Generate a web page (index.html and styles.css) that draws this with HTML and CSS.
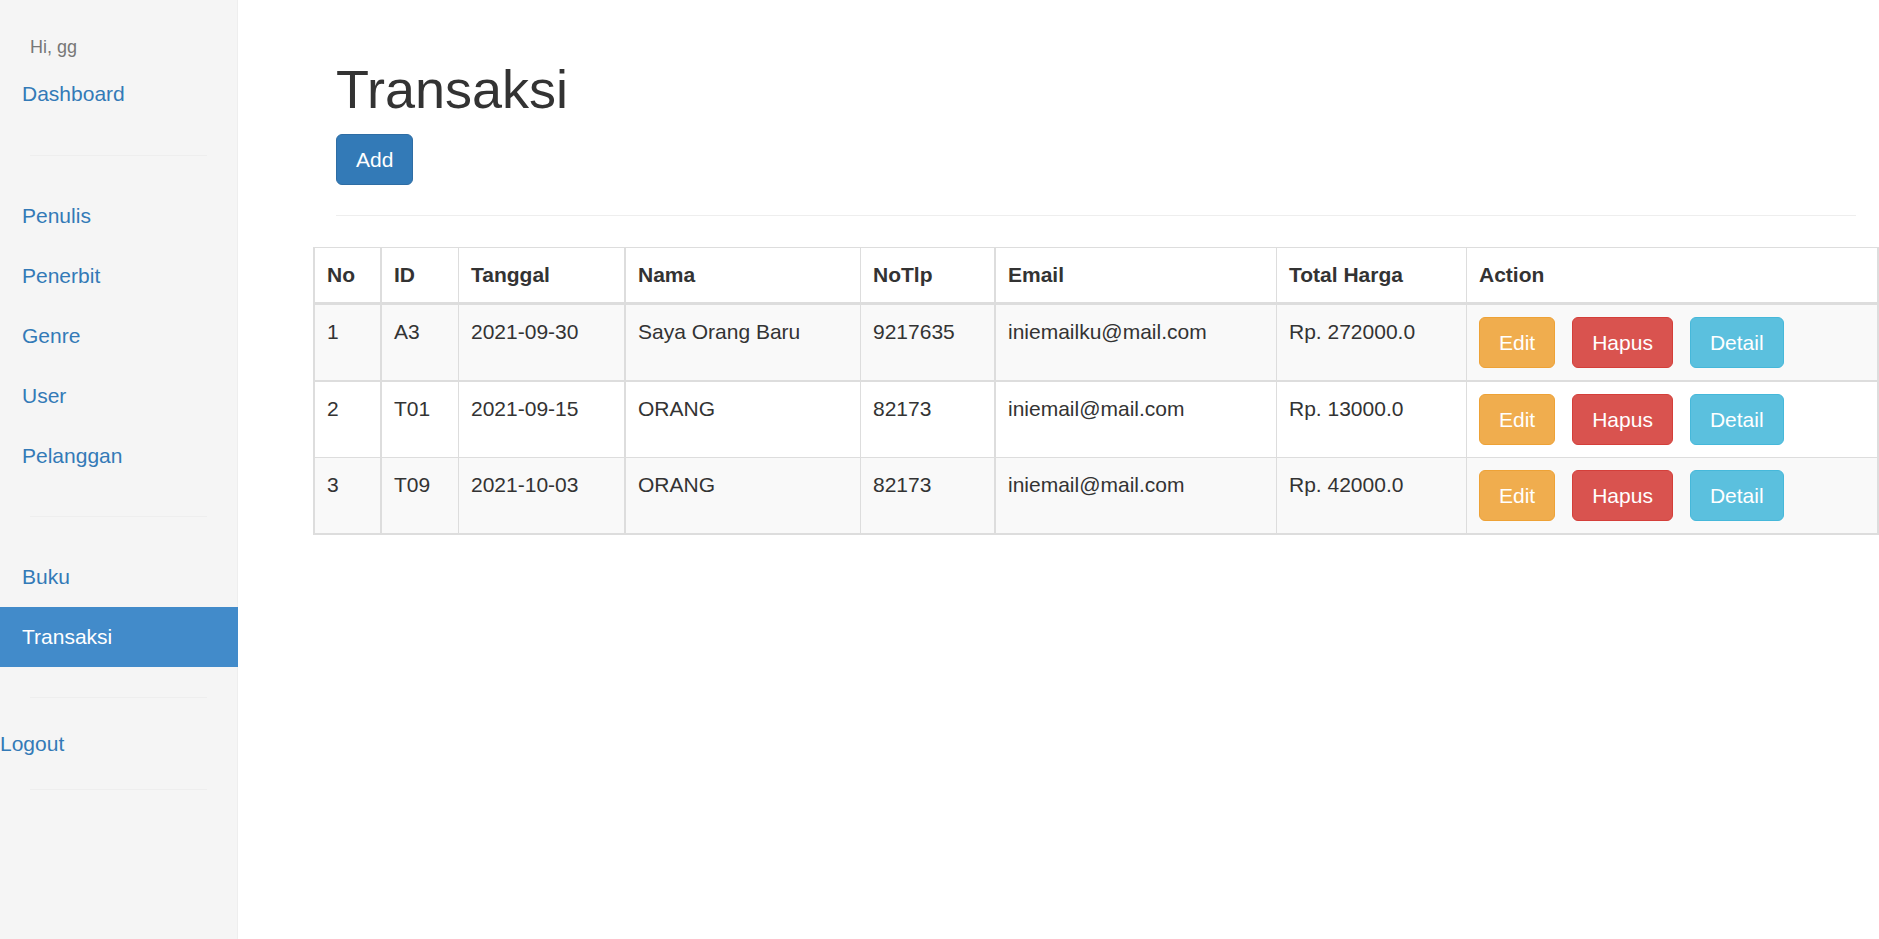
FILE: index.html
```html
<!DOCTYPE html>
<html lang="id">
<head>
<meta charset="utf-8">
<meta name="viewport" content="width=device-width, initial-scale=1">
<title>Transaksi</title>
<link rel="stylesheet" href="styles.css">
</head>
<body>
<div class="layout">
  <aside class="sidebar">
    <p class="greeting">Hi, gg</p>
    <nav>
      <ul class="nav nav-top">
        <li><a class="nav-link" href="#">Dashboard</a></li>
      </ul>
      <hr class="divider">
      <ul class="nav">
        <li><a class="nav-link" href="#">Penulis</a></li>
        <li><a class="nav-link" href="#">Penerbit</a></li>
        <li><a class="nav-link" href="#">Genre</a></li>
        <li><a class="nav-link" href="#">User</a></li>
        <li><a class="nav-link" href="#">Pelanggan</a></li>
      </ul>
      <hr class="divider">
      <ul class="nav">
        <li><a class="nav-link" href="#">Buku</a></li>
        <li><a class="nav-link active" href="#" aria-current="page">Transaksi</a></li>
      </ul>
      <hr class="divider">
      <a class="logout" href="#">Logout</a>
      <hr class="divider">
    </nav>
  </aside>
  <main class="main">
    <header class="page-header">
      <h1 class="title">Transaksi</h1>
      <button type="button" class="btn btn-primary">Add</button>
    </header>
    <table class="table">
      <colgroup>
        <col class="col-no"><col class="col-id"><col class="col-date"><col class="col-name">
        <col class="col-phone"><col class="col-email"><col class="col-total"><col>
      </colgroup>
      <thead>
        <tr><th>No</th><th>ID</th><th>Tanggal</th><th>Nama</th><th>NoTlp</th><th>Email</th><th>Total Harga</th><th>Action</th></tr>
      </thead>
      <tbody>
        <tr>
          <td>1</td><td>A3</td><td>2021-09-30</td><td>Saya Orang Baru</td><td>9217635</td><td>iniemailku@mail.com</td><td>Rp. 272000.0</td>
          <td><div class="actions"><button type="button" class="btn btn-warning">Edit</button><button type="button" class="btn btn-danger">Hapus</button><button type="button" class="btn btn-info">Detail</button></div></td>
        </tr>
        <tr>
          <td>2</td><td>T01</td><td>2021-09-15</td><td>ORANG</td><td>82173</td><td>iniemail@mail.com</td><td>Rp. 13000.0</td>
          <td><div class="actions"><button type="button" class="btn btn-warning">Edit</button><button type="button" class="btn btn-danger">Hapus</button><button type="button" class="btn btn-info">Detail</button></div></td>
        </tr>
        <tr>
          <td>3</td><td>T09</td><td>2021-10-03</td><td>ORANG</td><td>82173</td><td>iniemail@mail.com</td><td>Rp. 42000.0</td>
          <td><div class="actions"><button type="button" class="btn btn-warning">Edit</button><button type="button" class="btn btn-danger">Hapus</button><button type="button" class="btn btn-info">Detail</button></div></td>
        </tr>
      </tbody>
    </table>
  </main>
</div>
</body>
</html>
```

FILE: styles.css
```css
* {
  box-sizing: border-box;
}

body {
  margin: 0;
  background: #fff;
  color: #333;
  font-family: "Liberation Sans", Arial, sans-serif;
  font-size: 21px;
  line-height: 30px;
}

.layout {
  display: flex;
  min-height: 100vh;
}

/* Sidebar */
.sidebar {
  flex: none;
  width: 238px;
  padding-top: 34px;
  background: #f5f5f5;
  border-right: 1px solid #eee;
}

.greeting {
  margin: 0 30px;
  color: #777;
  font-size: 18px;
  line-height: 26px;
}

.nav {
  margin: 0 -1px 0 0;
  padding: 0;
  list-style: none;
}

.nav-top {
  padding-top: 4px;
  padding-bottom: 1px;
}

.nav-link {
  display: block;
  padding: 15px 22px;
  color: #337ab7;
  text-decoration: none;
}

.nav-link.active {
  background: #428bca;
  color: #fff;
}

.divider {
  margin: 30px;
  border: 0;
  border-top: 1px solid #eee;
}

.logout {
  display: block;
  padding-top: 1px;
  color: #337ab7;
  text-decoration: none;
}

/* Main content */
.main {
  flex: 1;
  min-width: 0;
  margin-left: 75px;
  padding-top: 60px;
}

.page-header {
  margin: 0 23px 31px;
  padding-bottom: 30px;
  border-bottom: 1px solid #eee;
}

.title {
  margin: 0 0 15px;
  font-size: 54px;
  font-weight: 500;
  line-height: 59px;
}

/* Buttons */
.btn {
  display: block;
  padding: 10px 19px;
  border: 1px solid transparent;
  border-radius: 6px;
  color: #fff;
  font: inherit;
  line-height: 29px;
  cursor: pointer;
}

.btn-primary {
  background: #337ab7;
  border-color: #2e6da4;
}

.btn-warning {
  background: #f0ad4e;
  border-color: #eea236;
}

.btn-danger {
  background: #d9534f;
  border-color: #d43f3a;
}

.btn-info {
  background: #5bc0de;
  border-color: #46b8da;
}

.actions {
  display: flex;
  gap: 17px;
}

/* Table */
.table {
  width: 100%;
  table-layout: fixed;
  border-collapse: separate;
  border-spacing: 0;
  border: solid #ddd;
  border-width: 1px 0 0 2px;
}

.table th,
.table td {
  padding: 12px;
  border: solid #ddd;
  border-width: 0 1px 2px 0;
  text-align: left;
  vertical-align: top;
}

.table th {
  border-bottom-width: 3px;
}

.table tbody tr:nth-child(even) td {
  border-bottom-width: 1px;
}

.table tbody tr:nth-child(odd) {
  background: #f9f9f9;
}

.table tr > :nth-child(1),
.table tr > :nth-child(3),
.table tr > :nth-child(5),
.table tr > :nth-child(8) {
  border-right-width: 2px;
}

.col-no { width: 67px; }
.col-id { width: 77px; }
.col-date { width: 167px; }
.col-name { width: 235px; }
.col-phone { width: 135px; }
.col-email { width: 281px; }
.col-total { width: 190px; }
```
